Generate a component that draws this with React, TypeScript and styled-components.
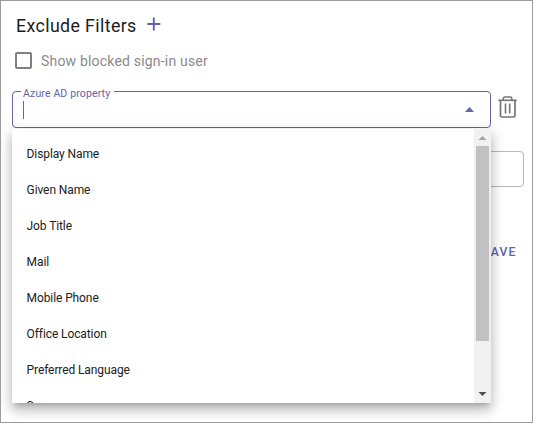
import React from 'react';
import styled, { createGlobalStyle } from 'styled-components';

const accent = '#6264a7';

const GlobalStyle = createGlobalStyle`
  * { box-sizing: border-box; }
  body { margin: 0; background: #fff; font-family: Roboto, sans-serif; }
`;

const Panel = styled.main`
  width: 533px;
  height: 423px;
  border: 1px solid #9b9b9b;
  overflow: hidden;
  background: #fff;
`;

const Header = styled.header`
  display: flex;
  align-items: center;
  height: 26px;
  margin: 12px 0 0 15px;
`;

const Title = styled.h1`
  margin: 0;
  font-size: 17.8px;
  font-weight: 400;
  letter-spacing: 0.38px;
  line-height: 26px;
  color: #1c1c1c;
`;

const AddButton = styled.button`
  display: flex;
  padding: 0;
  margin: -4px 0 0 10px;
  border: 0;
  background: none;
`;

const CheckRow = styled.label`
  display: flex;
  align-items: center;
  height: 20px;
  margin: 12px 0 0 14px;
  gap: 9px;
  font-size: 14px;
  letter-spacing: 0.19px;
  color: #8a8a8a;
`;

const CheckBox = styled.span`
  width: 17px;
  height: 17px;
  margin-top: -2px;
  border: 2px solid #808080;
  border-radius: 2px;
`;

const FilterRow = styled.div`
  display: flex;
  align-items: flex-start;
  margin: 20px 0 0 11px;
  gap: 7px;
`;

const DeleteButton = styled.button`
  display: flex;
  margin: 5px 0 0;
  padding: 0;
  border: 0;
  background: none;
`;

const SelectWrap = styled.div`
  position: relative;
  width: 479px;
  height: 37px;
`;

const Field = styled.div<{ $active?: boolean }>`
  display: flex;
  align-items: center;
  justify-content: space-between;
  height: ${p => (p.$active ? 37 : 36)}px;
  padding: 0 16px 0 10px;
  border: 1px solid ${p => (p.$active ? accent : '#b8b8b8')};
  border-radius: 4px;
`;

const FieldLabel = styled.span`
  position: absolute;
  top: -4px;
  left: 9px;
  padding: 0 4px 0 2px;
  width: 93px;
  background: #fff;
  font-size: 10.5px;
  line-height: 14px;
  letter-spacing: 0.14px;
  white-space: nowrap;
  color: ${accent};
`;

const Caret = styled.span`
  width: 1px;
  height: 18px;
  background: ${accent};
`;

const Menu = styled.div`
  position: absolute;
  z-index: 2;
  top: 38px;
  left: 0;
  width: 479px;
  height: 274px;
  display: flex;
  background: #fff;
  box-shadow: 0 5px 5px -3px rgba(0, 0, 0, 0.2), 0 8px 10px 1px rgba(0, 0, 0, 0.14),
    0 3px 14px 2px rgba(0, 0, 0, 0.12);
`;

const Options = styled.ul`
  flex: 1;
  margin: 0;
  padding: 7px 0 0;
  list-style: none;
  overflow: hidden;
`;

const Option = styled.li`
  height: 36px;
  padding-left: 14.6px;
  font-size: 12px;
  letter-spacing: -0.1px;
  line-height: 36px;
  color: #212121;
`;

const ScrollTrack = styled.div`
  display: flex;
  flex-direction: column;
  justify-content: space-between;
  align-items: center;
  width: 17px;
  background: #f1f1f1;
`;

const ScrollArrow = styled.div`
  display: flex;
  width: 17px;
  height: 17px;
`;

const ScrollThumb = styled.div`
  width: 13px;
  height: 195px;
  margin-bottom: auto;
  background: #c1c1c1;
`;

const NextField = styled.div`
  margin: 23px 8px 0 11px;
`;

const Actions = styled.footer`
  display: flex;
  justify-content: flex-end;
  margin: 56px 15.5px 0 0;
`;

const SaveButton = styled.button`
  padding: 0;
  border: 0;
  background: none;
  font: 500 12.25px/18px Roboto, sans-serif;
  letter-spacing: 1.1px;
  color: ${accent};
`;

const options = [
  'Display Name',
  'Given Name',
  'Job Title',
  'Mail',
  'Mobile Phone',
  'Office Location',
  'Preferred Language',
  'Surname',
];

const PlusIcon = () => (
  <svg width="14" height="14" viewBox="0 0 14 14">
    <path d="M6.800 .5v13M.3 7h13" stroke={accent} strokeWidth="1.9" />
  </svg>
);

const TrashIcon = () => (
  <svg width="20" height="22" viewBox="0 0 20 22" fill="none" stroke="#757575">
    <path d="M.4 4.300h18.400" strokeWidth="1.6" />
    <path d="M5.300 4V2.700Q5.300 1 7 1h5.200q1.700 0 1.700 1.700V4" strokeWidth="1.500" />
    <path d="M2.500 4.500v15q0 1.500 1.500 1.500h11.500q1.500 0 1.500-1.500v-15" strokeWidth="1.7" />
    <path d="M7.500 7.500v10M11.700 7.500v10" strokeWidth="1.600" />
  </svg>
);

const Triangle = ({ d, color }: { d: string; color: string }) => (
  <svg width="17" height="17" viewBox="0 0 17 17">
    <path d={d} fill={color} />
  </svg>
);

export default function App() {
  return (
    <>
      <GlobalStyle />
      <Panel>
        <Header>
          <Title>Exclude Filters</Title>
          <AddButton aria-label="Add filter"><PlusIcon /></AddButton>
        </Header>
        <CheckRow><CheckBox />Show blocked sign-in user</CheckRow>
        <FilterRow>
          <SelectWrap>
            <Field $active>
              <Caret />
              <svg width="9" height="5" viewBox="0 0 9 5"><path d="M0 5 4.500 0 9 5Z" fill={accent} /></svg>
            </Field>
            <FieldLabel>Azure AD property</FieldLabel>
            <Menu>
              <Options>{options.map(o => <Option key={o}>{o}</Option>)}</Options>
              <ScrollTrack>
                <ScrollArrow><Triangle d="M4.500 11 8.500 7 12.500 11Z" color="#a3a3a3" /></ScrollArrow>
                <ScrollThumb />
                <ScrollArrow><Triangle d="M4.500 6h8L8.500 10Z" color="#505050" /></ScrollArrow>
              </ScrollTrack>
            </Menu>
          </SelectWrap>
          <DeleteButton aria-label="Delete filter"><TrashIcon /></DeleteButton>
        </FilterRow>
        <NextField><Field /></NextField>
        <Actions><SaveButton>SAVE</SaveButton></Actions>
      </Panel>
    </>
  );
}
